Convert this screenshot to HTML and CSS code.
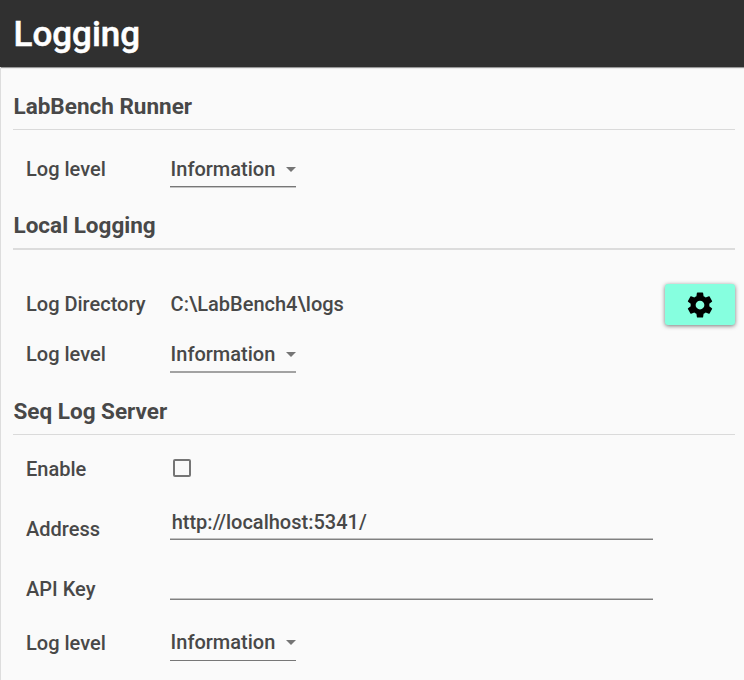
FILE: index.html
```html
<!DOCTYPE html>
<html lang="en">
<head>
<meta charset="utf-8">
<title>Logging</title>
<link rel="stylesheet" href="styles.css">
</head>
<body>
<header class="app-bar"><h1>Logging</h1></header>
<main class="content">
  <section class="runner">
    <h2>LabBench Runner</h2>
    <div class="row level"><span class="label">Log level</span><div class="select">Information<i class="arrow"></i></div></div>
  </section>
  <section class="local">
    <h2>Local Logging</h2>
    <div class="row directory"><span class="label">Log Directory</span><span class="value">C:\LabBench4\logs</span>
      <button class="settings" aria-label="Settings"><svg viewBox="0 0 24 24"><path d="M12,15.5A3.5,3.5 0 0,1 8.5,12A3.5,3.5 0 0,1 12,8.5A3.5,3.5 0 0,1 15.5,12A3.5,3.5 0 0,1 12,15.5M19.43,12.97C19.47,12.65 19.5,12.33 19.5,12C19.5,11.67 19.47,11.34 19.43,11L21.54,9.37C21.73,9.22 21.78,8.95 21.66,8.73L19.66,5.27C19.54,5.05 19.27,4.96 19.05,5.05L16.56,6.05C16.04,5.66 15.5,5.32 14.87,5.07L14.5,2.42C14.46,2.18 14.25,2 14,2H10C9.75,2 9.54,2.18 9.5,2.42L9.13,5.07C8.5,5.32 7.96,5.66 7.44,6.05L4.95,5.05C4.73,4.96 4.46,5.05 4.34,5.27L2.34,8.73C2.21,8.95 2.27,9.22 2.46,9.37L4.57,11C4.53,11.34 4.5,11.67 4.5,12C4.5,12.33 4.53,12.65 4.57,12.97L2.46,14.63C2.27,14.78 2.21,15.05 2.34,15.27L4.34,18.73C4.46,18.95 4.73,19.03 4.95,18.95L7.44,17.94C7.96,18.34 8.5,18.68 9.13,18.93L9.5,21.58C9.54,21.82 9.75,22 10,22H14C14.25,22 14.46,21.82 14.5,21.58L14.87,18.93C15.5,18.67 16.04,18.34 16.56,17.94L19.05,18.95C19.27,19.03 19.54,18.95 19.66,18.73L21.66,15.27C21.78,15.05 21.73,14.78 21.54,14.63L19.43,12.97Z"/></svg></button>
    </div>
    <div class="row level"><span class="label">Log level</span><div class="select">Information<i class="arrow"></i></div></div>
  </section>
  <section class="seq">
    <h2>Seq Log Server</h2>
    <div class="row enable"><span class="label">Enable</span><span class="checkbox"></span></div>
    <div class="row address"><span class="label">Address</span><div class="field">http://localhost:5341/</div></div>
    <div class="row api"><span class="label">API Key</span><div class="field"></div></div>
    <div class="row level"><span class="label">Log level</span><div class="select">Information<i class="arrow"></i></div></div>
  </section>
</main>
</body>
</html>
```
FILE: styles.css
```css
* { box-sizing: border-box; }
body { margin: 0; height: 680px; overflow: hidden; background: #fafafa; color: #484848; font: 500 20px/24px Roboto, sans-serif; display: flex; flex-direction: column; }
.app-bar { flex: none; height: 67px; padding: 14px 13.5px; background: #303030; color: #fff; box-shadow: 0 1px 1px #999; }
h1 { margin: 0; font-size: 35px; line-height: 42px; font-weight: 500; -webkit-text-stroke: 0.5px #fff; }
.content { flex: 1; padding: 23px 9px 0 12px; border-left: 1px solid #ddd; }
h2 { margin: 0; height: 40px; padding: 3px 0 0 0.5px; font-size: 22.5px; line-height: 26px; font-weight: 700; border-bottom: 1px solid #dadada; }
.local h2 { height: 41px; border-bottom: 2px solid #dcdcdc; }
.row { display: grid; grid-template-columns: 144px 483px 1fr; padding-left: 13px; }
.value { padding-left: 0.6px; }
.select { display: flex; align-items: flex-start; justify-content: space-between; width: 126px; height: 31px; padding-left: 0.6px; border-bottom: 1px solid #777; }
.arrow { margin-top: 10px; border: 5px solid transparent; border-top-color: #757575; border-bottom: 0; }
.runner { height: 119px; }
.runner .level { padding-top: 27px; }
.runner .select { height: 30px; box-shadow: 0 1px #c4c4c4; }
.local { height: 186px; }
.local .select { border-bottom: 2px solid #a2a2a2; }
.directory { height: 92px; padding-top: 34px; align-items: start; }
.directory .label, .directory .value { margin-top: 8px; }
.settings { width: 70px; height: 41px; margin-left: 12px; padding: 0; border: 0; border-radius: 3px; background: #86ffdf; box-shadow: 0 1px 4px #777; display: grid; place-items: center; }
.settings svg { width: 30px; height: 30px; }
.enable { height: 56px; padding-top: 22px; }
.checkbox { width: 18px; height: 18px; margin: 2px 0 0 3px; border: 2px solid #757575; border-radius: 2px; }
.field { height: 30px; padding-left: 1.7px; border-bottom: 1px solid #808080; box-shadow: inset 0 -1px #c0c0c0; }
.address { height: 60px; padding-top: 19px; }
.address .label, .api .label { margin-top: 7px; }
.api { height: 61px; padding-top: 19px; }
.seq .level { padding-top: 18px; }
.seq .level .label { margin-top: 1px; }
```
